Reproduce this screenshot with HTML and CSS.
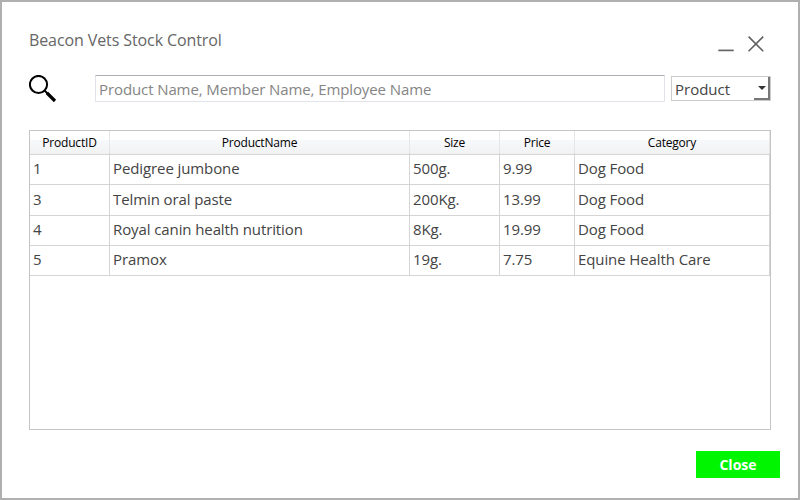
FILE: index.html
```html
<!DOCTYPE html>
<html lang="en">
<head>
<meta charset="utf-8">
<title>Beacon Vets Stock Control</title>
<link rel="stylesheet" href="styles.css">
</head>
<body>
<main class="window">
  <header class="titlebar">
    <h1 class="title">Beacon Vets Stock Control</h1>
    <div class="controls">
      <svg width="16" height="18" viewBox="0 0 16 18"><path d="M0.3 15.4H15.7" stroke="#666" stroke-width="1.7"/></svg>
      <svg width="16" height="18" viewBox="0 0 16 18"><path d="M.6 1.6L15.2 16.2M15.2 1.6L.6 16.2" stroke="#606060" stroke-width="1.6"/></svg>
    </div>
  </header>
  <section class="search">
    <svg class="lens" width="28" height="28" viewBox="0 0 28 28" fill="none" stroke="#000"><circle cx="9.5" cy="9.5" r="8.6" stroke-width="2"/><path d="M15.5 15.5L19 19" stroke-width="2"/><path d="M18 18L26 26" stroke-width="3.2"/></svg>
    <div class="field">Product Name, Member Name, Employee Name</div>
    <div class="select"><span class="value">Product</span><span class="drop"><svg width="8" height="4" viewBox="0 0 8 4"><path d="M0 0H8L4 4Z" fill="#333"/></svg></span></div>
  </section>
  <section class="grid">
    <div class="row head"><span>ProductID</span><span>ProductName</span><span>Size</span><span>Price</span><span>Category</span></div>
    <div class="row"><span>1</span><span>Pedigree jumbone</span><span>500g.</span><span>9.99</span><span>Dog Food</span></div>
    <div class="row"><span>3</span><span>Telmin oral paste</span><span>200Kg.</span><span>13.99</span><span>Dog Food</span></div>
    <div class="row"><span>4</span><span>Royal canin health nutrition</span><span>8Kg.</span><span>19.99</span><span>Dog Food</span></div>
    <div class="row"><span>5</span><span>Pramox</span><span>19g.</span><span>7.75</span><span>Equine Health Care</span></div>
  </section>
  <footer class="footer"><button class="close">Close</button></footer>
</main>
</body>
</html>
```

FILE: styles.css
```css
* { box-sizing: border-box; }
body { margin: 0; font-family: "Open Sans", "Noto Sans", sans-serif; font-size: 15px; color: #444; }
.window { width: 800px; height: 500px; border: 2px solid #b0b0b0; background: #fff; padding: 26px 27px 0; }
.titlebar { display: flex; justify-content: space-between; height: 45px; }
.title { margin: 0; font-size: 16px; font-weight: 400; line-height: 24px; color: #666; letter-spacing: -0.1px; }
.controls { display: flex; gap: 14px; padding: 7px 7px 0 0; }
.search { display: flex; height: 57px; align-items: flex-start; padding-top: 2px; }
.lens { margin-right: 38px; }
.field { width: 570px; height: 27px; border: 1px solid #e2e3ea; border-top-color: #abadb3; border-radius: 1px; padding-left: 3px; line-height: 27px; color: #858585; white-space: nowrap; letter-spacing: -0.1px; }
.select { display: flex; justify-content: space-between; width: 100px; height: 25px; margin: 1px 0 0 6px; border: 1px solid #ccc; padding-left: 3px; line-height: 25px; }
.drop { display: flex; width: 16px; border-right: 2px solid #777; border-bottom: 2px solid #777; padding: 9px 0 0 4px; }
.grid { width: 742px; height: 300px; border: 1px solid #c4c4c4; }
.row { display: grid; grid-template-columns: 80px 300px 90px 75px 195px; height: 30px; }
.row span { border-right: 1px solid #d5d5d5; border-bottom: 1px solid #d5d5d5; padding-left: 3px; line-height: 31px; white-space: nowrap; letter-spacing: -0.1px; }
.head { height: 22px; }
.head + .row { height: 31px; }
.row.head span { padding: 0; text-align: center; font-size: 12px; line-height: 23px; color: #000; letter-spacing: -0.2px; border-right-color: #e4e6e8; background: linear-gradient(#fff 0 40%, #f7f8fa 41%, #f1f2f4 100%); }
.footer { display: flex; justify-content: flex-end; margin: 21px -9px 0 0; }
.close { width: 84px; height: 27px; border: 0; padding: 0; background: #00f500; color: #fff; font: bold 14px/27px "Open Sans", sans-serif; }
```
